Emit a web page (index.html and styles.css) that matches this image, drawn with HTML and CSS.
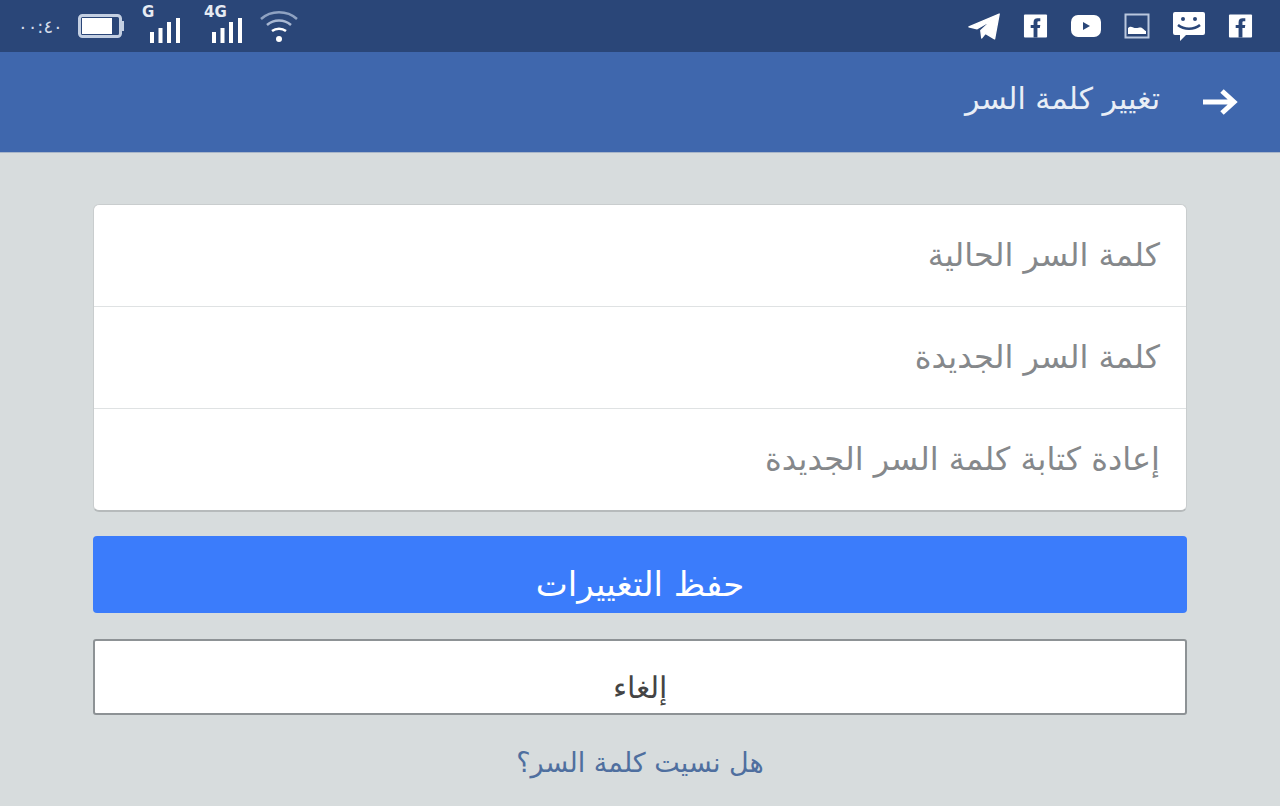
FILE: index.html
```html
<!DOCTYPE html>
<html lang="ar" dir="rtl">
<head>
    <meta charset="UTF-8">
    <meta name="viewport" content="width=device-width, initial-scale=1.0">
    <title>تغيير كلمة السر</title>
    <link rel="stylesheet" href="styles.css">
</head>
<body>
    <div class="status-bar">
        <div class="status-apps">
            <svg class="ico" width="33" height="30" viewBox="0 0 36 32"><path d="M1 17 34 3 29 30 19 24 15 29 14 21 27 9 10 19 Z" fill="#fff" stroke="#fff" stroke-width="1.5" stroke-linejoin="round"/></svg>
            <svg class="ico" width="25" height="26" viewBox="0 0 26 26"><rect x="1" y="1" width="24" height="24" rx="1" fill="#fff"/><path d="M11 25V15H8v-3h3V9c0-3 2-4 4-4h3v3h-2c-1 0-1 1-1 1v3h3l-.5 3H15v10z" fill="#2a4678"/></svg>
            <svg class="ico" width="32" height="26" viewBox="0 0 32 26"><rect x="1" y="2" width="30" height="22" rx="7" fill="#fff"/><path d="M13 9l7 4-7 4z" fill="#2a4678"/></svg>
            <svg class="ico" width="26" height="28" viewBox="0 0 26 28"><rect x="1.500" y="2.500" width="23" height="23" fill="none" stroke="#b9c7de" stroke-width="2"/><path d="M4 22v-6c3-3 5 0 8 0s4-1 6 0 3 3 4 3v3z" fill="#fff"/></svg>
            <svg class="ico" width="34" height="34" viewBox="0 0 34 34"><path d="M3 3h28a2 2 0 0 1 2 2v19a2 2 0 0 1-2 2H14l-6 6v-6H3a2 2 0 0 1-2-2V5a2 2 0 0 1 2-2z" fill="#fff"/><circle cx="11" cy="10" r="2" fill="#2a4678"/><circle cx="23" cy="10" r="2" fill="#2a4678"/><path d="M6 16c6 5 16 5 22 0" fill="none" stroke="#2a4678" stroke-width="2.500"/></svg>
            <svg class="ico" width="25" height="26" viewBox="0 0 26 26"><rect x="1" y="1" width="24" height="24" rx="1" fill="#fff"/><path d="M11 25V15H8v-3h3V9c0-3 2-4 4-4h3v3h-2c-1 0-1 1-1 1v3h3l-.5 3H15v10z" fill="#2a4678"/></svg>
        </div>
        <div class="status-system">
            <span class="clock" dir="ltr">٠٠:٤٠</span>
            <svg class="battery" width="46" height="26" viewBox="0 0 46 26"><rect x="1.500" y="2.500" width="41" height="21" rx="3" fill="#2a4678" stroke="#c3cfe2" stroke-width="3"/><rect x="4" y="5" width="30" height="16" fill="#fff"/><rect x="43" y="8" width="3" height="10" fill="#c3cfe2"/></svg>
            <div class="signal">
                <span class="net">G</span>
                <svg class="bars" width="32" height="25" viewBox="0 0 32 25"><path d="M3 14v11M11.500 10v15M20 4v21M29 0v25" stroke="#fff" stroke-width="4"/></svg>
            </div>
            <div class="signal">
                <span class="net">4G</span>
                <svg class="bars" width="32" height="25" viewBox="0 0 32 25"><path d="M3 14v11M11.500 10v15M20 4v21M29 0v25" stroke="#fff" stroke-width="4"/></svg>
            </div>
            <svg class="wifi" width="40" height="36" viewBox="0 0 40 36"><g fill="none" stroke-width="2.500"><path d="M2 11c10-9 26-9 36 0" stroke="#8fa2c2"/><path d="M8 17c7-6 17-6 24 0" stroke="#a9b8d2"/><path d="M13 23c4-3 10-3 14 0" stroke="#fff"/></g><circle cx="20" cy="31" r="3" fill="#fff"/></svg>
        </div>
    </div>

    <header class="toolbar">
        <svg class="back" width="36" height="30" viewBox="0 0 36 30"><path d="M1 15h30M20 4l12 11-12 11" fill="none" stroke="#fff" stroke-width="5"/></svg>
        <h1>تغيير كلمة السر</h1>
    </header>

    <main class="content">
        <div class="fields">
            <div class="field">كلمة السر الحالية</div>
            <div class="field">كلمة السر الجديدة</div>
            <div class="field">إعادة كتابة كلمة السر الجديدة</div>
        </div>
        <button class="btn btn-save">حفظ التغييرات</button>
        <button class="btn btn-cancel">إلغاء</button>
        <a class="forgot" href="#">هل نسيت كلمة السر؟</a>
    </main>
</body>
</html>
```

FILE: styles.css
```css
html, body { margin: 0; height: 806px; overflow: hidden; }
body { background: #d7dcdd; font-family: "DejaVu Sans", "Noto Sans", sans-serif; }

.status-bar { height: 52px; background: #2a4678; display: flex; justify-content: space-between; align-items: center; padding: 0 27px 0 18px; }
.status-apps { display: flex; align-items: center; gap: 22px; direction: ltr; }
.ico { display: block; flex: none; }
.status-system { display: flex; align-items: center; direction: ltr; }
.clock { color: #d5dcea; font-size: 18px; width: 60px; }
.battery { margin-right: 25px; }
.signal { position: relative; width: 32px; height: 44px; margin-right: 30px; display: flex; align-items: flex-end; }
.signal:last-of-type { margin-right: 16px; }
.bars { margin-bottom: 5px; }
.net { position: absolute; left: -7px; top: -1px; color: #e6ebf3; font-size: 15px; font-weight: bold; line-height: 18px; }

.toolbar { height: 100px; background: #3f67ad; border-bottom: 1px solid #a9b6c9; display: flex; align-items: center; padding: 0 42px; gap: 42px; }
.toolbar h1 { margin: 0 0 8px; color: #e9eef6; font-size: 30px; font-weight: normal; }

.content { padding: 51px 93px 0; display: flex; flex-direction: column; }
.fields { background: #fff; border: 1px solid #c9cdce; border-bottom: 2px solid #b6babb; border-radius: 6px; }
.field { height: 101px; line-height: 101px; padding: 0 26px; border-bottom: 1px solid #dfe2e3; color: #85888b; font-size: 32px; }
.field:last-child { border-bottom: none; }

.btn { display: block; width: 100%; padding: 0; font-family: inherit; }
.btn-save { height: 77px; margin-top: 24px; background: #3b7cfb; border: none; border-radius: 4px; color: #fff; font-size: 34px; padding-top: 19px; }
.btn-cancel { height: 76px; margin-top: 26px; background: #fff; border: 2px solid #8d9295; border-radius: 3px; color: #444; font-size: 30px; font-weight: 300; padding-top: 20px; }

.forgot { margin-top: 32px; text-align: center; color: #4f6f9f; font-size: 27px; text-decoration: none; }
```
